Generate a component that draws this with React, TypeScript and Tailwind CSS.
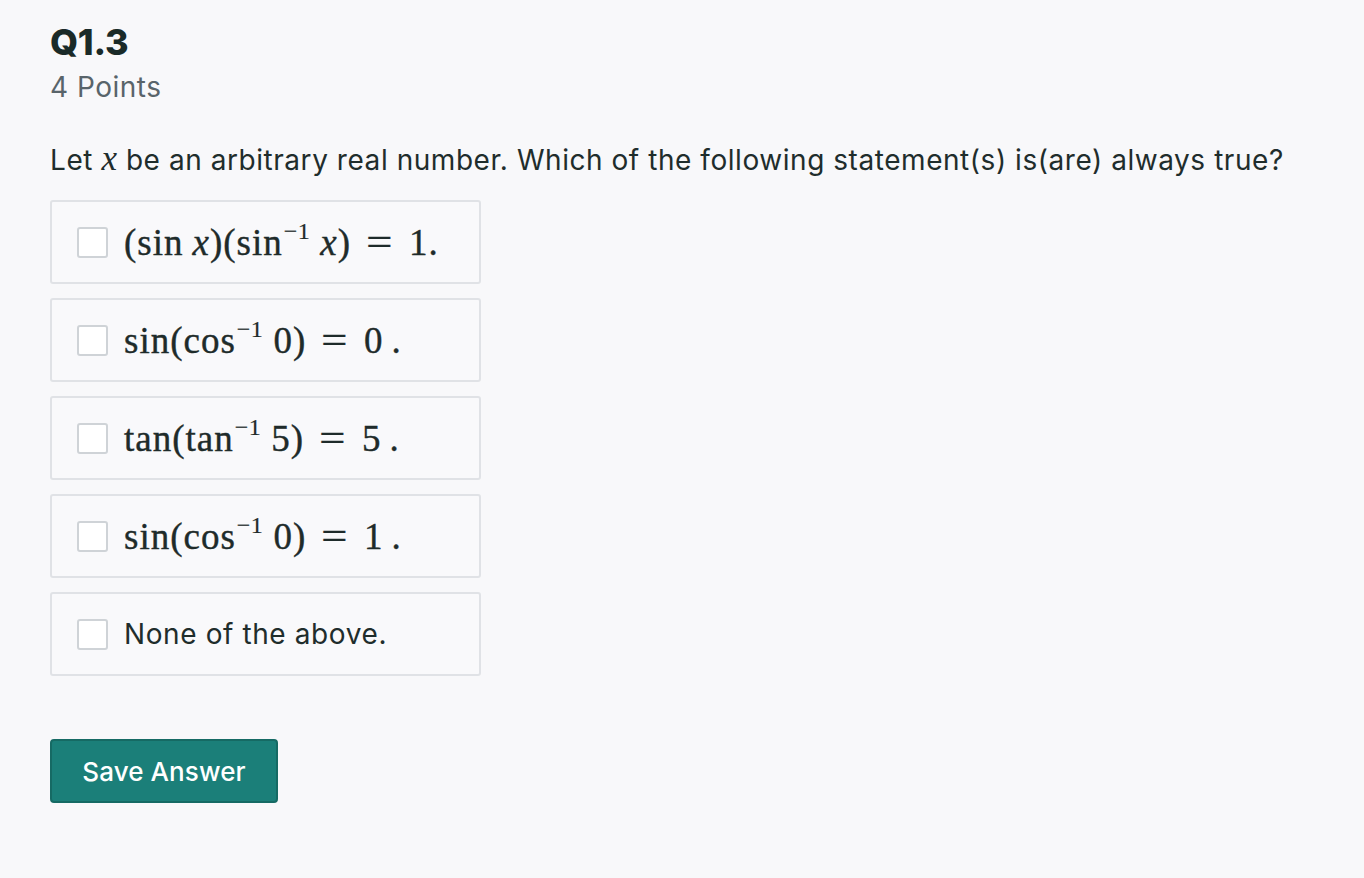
import React from "react";

const sans = { fontFamily: "Inter, 'Open Sans', sans-serif" };
const serif = { fontFamily: "'Liberation Serif', 'DejaVu Serif', serif" };

function M({ children }: { children: React.ReactNode }) {
  return (
    <span
      className="text-[37px] leading-none text-[#1e2b2a] whitespace-nowrap tracking-[1px] flex items-baseline [-webkit-text-stroke:0.4px_#1e2b2a]"
      style={serif}
    >
      {children}
    </span>
  );
}

function Sup() {
  return <span className="text-[24px] relative -top-[16px] ml-[1px] mr-[10px] tracking-[0.5px] [-webkit-text-stroke:0.2px_#1e2b2a]">−1</span>;
}

function Eq() {
  return <span className="inline-block scale-x-125 mx-[18px]">=</span>;
}

function Option({ children }: { children: React.ReactNode }) {
  return (
    <div className="w-[431px] h-[84px] border-2 border-[#e0e2e6] rounded-[3px] bg-[#f9f9fb] flex items-center pl-[25px]">
      <div className="w-[31px] h-[31px] border-2 border-[#cfd3d7] rounded-[3px] bg-white shrink-0" />
      <div className="ml-[16px] flex items-center">{children}</div>
    </div>
  );
}

export default function App() {
  return (
    <div className="min-h-[878px] w-full bg-[#f8f8fa] text-[#1f2d2c] pl-[50px] pt-[20px]" style={sans}>
      <h1 className="text-[36px] font-extrabold leading-[44px] text-[#1a2a28] tracking-[-0.3px]">Q1.3</h1>
      <div className="text-[28px] leading-[36px] text-[#59646a] mt-[5px] tracking-[0.5px]">4 Points</div>
      <p className="text-[28px] leading-[36px] mt-[36px] text-[#1f2d2c] tracking-[0.55px]">
        Let <i style={serif} className="text-[35px]">x</i> be an arbitrary real number. Which of the following statement(s) is(are) always true?
      </p>
      <div className="mt-[22px] flex flex-col gap-[14px]">
        <Option>
          <M>
            (sin<span className="ml-[9px]" /><i>x</i>)(sin<Sup /><i>x</i>)<Eq />1.
          </M>
        </Option>
        <Option>
          <M>
            sin(cos<Sup />0)<Eq />0<span className="ml-[8px]">.</span>
          </M>
        </Option>
        <Option>
          <M>
            tan(tan<Sup />5)<Eq />5<span className="ml-[8px]">.</span>
          </M>
        </Option>
        <Option>
          <M>
            sin(cos<Sup />0)<Eq />1<span className="ml-[8px]">.</span>
          </M>
        </Option>
        <Option>
          <span className="text-[28px] tracking-[0.6px]">None of the above.</span>
        </Option>
      </div>
      <button className="mt-[63px] w-[228px] h-[64px] bg-[#1b7f79] border-2 border-[#166a64] rounded-[4px] text-white text-[26px] font-medium tracking-[0.1px]">
        Save Answer
      </button>
    </div>
  );
}
